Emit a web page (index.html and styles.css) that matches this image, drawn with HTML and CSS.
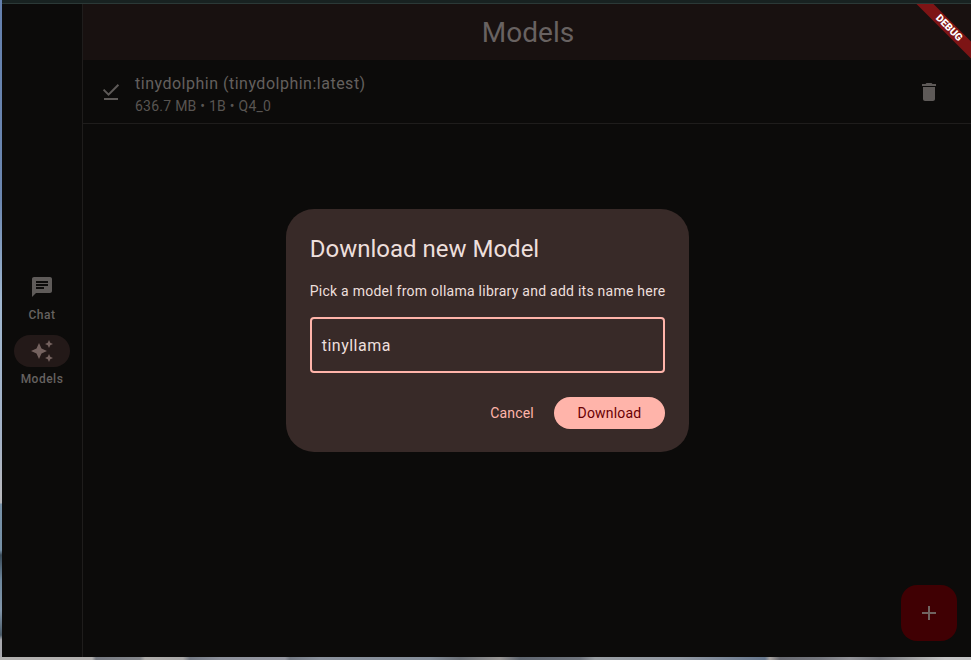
FILE: index.html
```html
<!DOCTYPE html>
<html lang="en">
<head>
<meta charset="utf-8">
<title>Models</title>
<link rel="stylesheet" href="styles.css">
</head>
<body>
<div class="desktop">
  <div class="titlebar"></div>
  <div class="window">
    <nav class="rail">
      <a class="destination">
        <span class="indicator"><svg class="icon" viewBox="0 0 24 24"><path d="M20 2H4c-1.100 0-2 .9-2 2v18l4-4h14c1.100 0 2-.9 2-2V4c0-1.100-.9-2-2-2zM6 9h12v2H6V9zm8 5H6v-2h8v2zm4-6H6V6h12v2z"/></svg></span>
        <span class="label">Chat</span>
      </a>
      <a class="destination selected">
        <span class="indicator"><svg class="icon" viewBox="0 0 24 24"><path d="M19 9l1.250-2.750L23 5l-2.750-1.250L19 1l-1.250 2.750L15 5l2.750 1.250L19 9zm-7.500.5L9 4 6.500 9.500 1 12l5.500 2.500L9 20l2.500-5.500L17 12l-5.500-2.500zM19 15l-1.250 2.750L15 19l2.750 1.250L19 23l1.250-2.750L23 19l-2.750-1.250L19 15z"/></svg></span>
        <span class="label">Models</span>
      </a>
    </nav>
    <main class="content">
      <header class="appbar"><h1>Models</h1></header>
      <div class="row">
        <svg class="icon" viewBox="0 0 24 24"><path d="M20.130 5.410 18.720 4l-9.190 9.190-4.250-4.240-1.410 1.410 5.660 5.660zM5 18h14v2H5z"/></svg>
        <div class="row-text">
          <div class="name">tinydolphin (tinydolphin:latest)</div>
          <div class="meta">636.7 MB • 1B • Q4_0</div>
        </div>
        <svg class="icon" viewBox="0 0 24 24"><path d="M6 19c0 1.100.9 2 2 2h8c1.100 0 2-.9 2-2V7H6v12zM19 4h-3.500l-1-1h-5l-1 1H5v2h14V4z"/></svg>
      </div>
    </main>
    <button class="fab"><svg class="icon" viewBox="0 0 24 24"><path d="M19 13h-6v6h-2v-6H5v-2h6V5h2v6h6v2z"/></svg></button>
    <section class="dialog">
      <h2>Download new Model</h2>
      <p>Pick a model from ollama library and add its name here</p>
      <div class="field">tinyllama</div>
      <div class="actions">
        <button class="cancel">Cancel</button>
        <button class="download">Download</button>
      </div>
    </section>
    <div class="banner">DEBUG</div>
  </div>
</div>
</body>
</html>
```
FILE: styles.css
```css
* { box-sizing: border-box; }

body {
  margin: 0;
  font-family: Roboto, "Liberation Sans", sans-serif;
}

h1, h2, p { margin: 0; font-weight: 400; }

button { border: 0; padding: 0; font: inherit; letter-spacing: inherit; }

.desktop {
  position: relative;
  width: 971px;
  height: 660px;
  padding: 0 0 3px 2px;
  overflow: hidden;
  background:
    linear-gradient(#6480ad 0, #6c87b0 200px, #9fb6cf 300px, #a4b2c6 440px, #b9b9bd 495px, #b5b5b9 503px, #7892a8 504px, #7690a6 550px, #3a4b59 555px, #6e879d 580px, #8296aa 610px, #4a5a68 635px, #a9a9ae 640px) 0 0 / 2px 657px no-repeat,
    linear-gradient(90deg, #b3b1b0 0, #b3b1b0 92px, #777b83 96px, #85878c 140px, #b0aeac 145px, #aaa9a9 183px, #747a85 190px, #8d919b 220px, #9698a2 285px, #747a84 290px, #8b929d 320px, #858e9a 430px, #6c7178 460px, #999796 500px, #5f6670 520px, #70757e 580px, #9a9fa4 595px, #9299a3 680px, #68788e 765px, #aaa5a2 770px, #696b72 780px, #75777e 820px, #939499 850px, #77797f 880px, #aaaaab 920px, #c5c5c6 945px) 0 657px / 971px 3px no-repeat;
}

.titlebar {
  height: 4px;
  background: linear-gradient(#182221 0 3px, #2b3937 3px);
}

.window {
  position: relative;
  display: flex;
  width: 971px;
  height: 653px;
  background: #0c0b0a;
  clip-path: inset(0);
}

.rail {
  display: flex;
  flex-direction: column;
  justify-content: center;
  gap: 12px;
  width: 81px;
  padding-bottom: 4px;
  border-right: 1px solid #1f1d1c;
}

.destination {
  display: flex;
  flex-direction: column;
  align-items: center;
  gap: 4px;
  color: #5f5b59;
}

.indicator {
  display: flex;
  align-items: center;
  justify-content: center;
  width: 56px;
  height: 32px;
  border-radius: 16px;
}

.selected .indicator { background: #231918; color: #74625f; }

.label {
  font-size: 12px;
  font-weight: 500;
  line-height: 16px;
  letter-spacing: .5px;
  color: #666260;
}

.icon { flex: none; width: 24px; height: 24px; fill: currentColor; }

.content { flex: 1; }

.appbar {
  display: flex;
  align-items: center;
  justify-content: center;
  height: 56px;
  padding-top: 2px;
  background: #181110;
  color: #686261;
}

.appbar h1 { font-size: 28px; line-height: 36px; }

.row {
  display: flex;
  align-items: center;
  gap: 12px;
  height: 64px;
  padding: 0 32px 0 16px;
  border-bottom: 1px solid #1f1d1c;
  color: #5e5a58;
}

.row-text { flex: 1; padding-top: 4px; }

.name {
  font-size: 16px;
  line-height: 24px;
  letter-spacing: .5px;
  color: #64605e;
}

.meta {
  font-size: 14px;
  line-height: 20px;
  letter-spacing: .25px;
  color: #595552;
}

.fab {
  position: absolute;
  right: 16px;
  bottom: 16px;
  display: flex;
  align-items: center;
  justify-content: center;
  width: 56px;
  height: 56px;
  border-radius: 16px;
  background: #400003;
  color: #706461;
}

.dialog {
  position: absolute;
  top: 204.5px;
  left: 283.7px;
  width: 403.3px;
  height: 243.5px;
  padding: 24px 24px 0;
  border-radius: 28px;
  background: #382a28;
  color: #eddfdc;
}

.dialog h2 { font-size: 24px; line-height: 32px; }

.dialog p {
  margin-top: 16px;
  font-size: 14px;
  line-height: 20px;
  letter-spacing: .25px;
  white-space: nowrap;
}

.field {
  height: 56px;
  margin-top: 16px;
  padding: 0 10px;
  border: 2px solid #ffb4aa;
  border-radius: 4px;
  font-size: 16px;
  line-height: 53px;
  letter-spacing: .5px;
}

.actions {
  display: flex;
  justify-content: flex-end;
  gap: 8px;
  margin-top: 24px;
  font-size: 14px;
  letter-spacing: .2px;
}

.cancel { padding: 0 12px; background: none; color: #ffb4aa; }

.download {
  width: 111px;
  height: 32px;
  border-radius: 16px;
  background: #ffb4aa;
  color: #690003;
}

.banner {
  position: absolute;
  top: 18px;
  left: 897px;
  width: 100px;
  height: 12px;
  transform: rotate(45deg);
  background: #7d1415;
  color: #fff;
  font-size: 10.2px;
  font-weight: 900;
  line-height: 12px;
  text-align: center;
}
```
